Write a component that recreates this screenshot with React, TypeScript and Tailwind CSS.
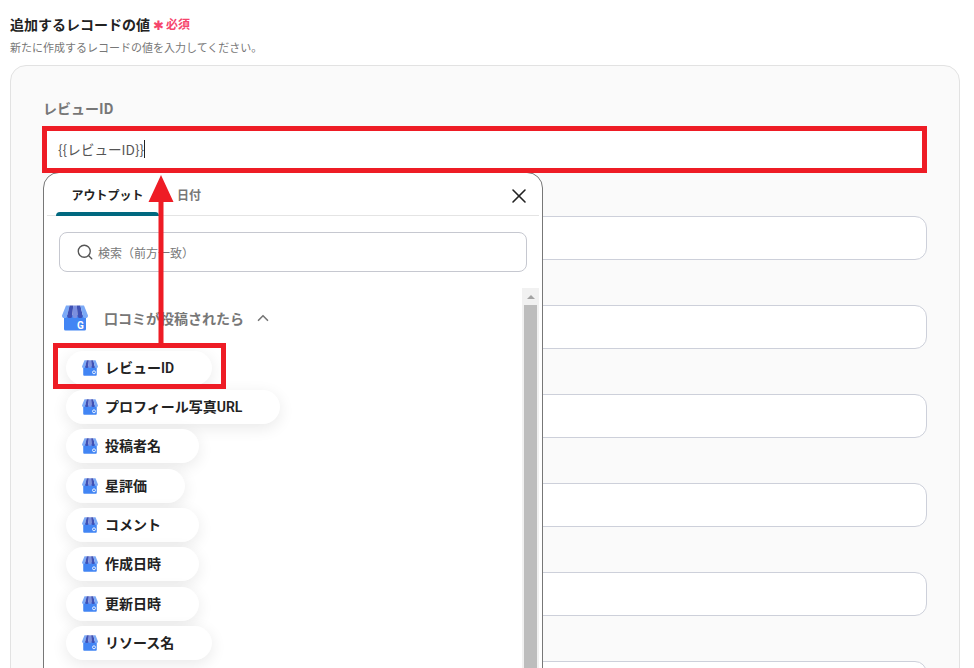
import React from "react";
import { ChevronUp, Search, X } from "lucide-react";

const outputs = [
  { label: "レビューID" },
  { label: "プロフィール写真URL" },
  { label: "投稿者名" },
  { label: "星評価" },
  { label: "コメント" },
  { label: "作成日時" },
  { label: "更新日時" },
  { label: "リソース名" },
];

// five awning stripes: [top-left x, top-right x, bottom-left x, bottom-right x, colour]
const stripes: [number, number, number, number, string][] = [
  [4, 7.6, 0, 5.2, "#7baaf7"],
  [7.6, 11.2, 5.2, 10.4, "#3f51b5"],
  [11.2, 14.8, 10.4, 15.6, "#7b8fe0"],
  [14.8, 18.4, 15.6, 20.8, "#3f51b5"],
  [18.4, 22, 20.8, 26, "#7baaf7"],
];

function StoreIcon({ small }: { small?: boolean }) {
  return (
    <svg
      viewBox="0 0 26 26"
      className={small ? "w-4 h-4 shrink-0" : "w-[26px] h-[26px] shrink-0"}
    >
      <path d="M2 10h22v14a1.5 1.5 0 0 1-1.5 1.5h-19A1.5 1.5 0 0 1 2 24z" fill="#4285f4" />
      {stripes.map(([a, b, c, d, color]) => (
        <path
          key={a}
          d={`M${a} 0.5H${b}L${d} 10.5A2.6 2.6 0 0 1 ${c} 10.5Z`}
          fill={color}
        />
      ))}
      {small ? (
        <circle cx="19.5" cy="20" r="2.4" fill="none" stroke="#fff" strokeWidth="1.4" />
      ) : (
        <text x="15" y="23.5" fontSize="10" fontWeight="700" fill="#fff" fontFamily="Roboto, sans-serif">
          G
        </text>
      )}
    </svg>
  );
}

function OutputPicker() {
  return (
    <div className="absolute left-0 top-[74px] z-10 w-[500px] h-[600px] bg-white border border-[#777] rounded-t-2xl">
      <div className="relative h-[43px] mx-[3px] border-b border-[#e4e4e4] flex items-end">
        <div className="relative w-[103px] ml-[9px] h-[43px] flex items-center justify-center text-xs font-bold text-[#222] pt-[2px]">
          アウトプット
          <div className="absolute left-0 right-0 bottom-[-1px] h-1 rounded-t bg-[#00687f]" />
        </div>
        <div className="ml-[18px] h-[43px] flex items-center text-xs font-bold text-[#777] pt-[2px]">
          日付
        </div>
        <button className="absolute right-[8px] top-[11px] text-[#222]">
          <X size={24} strokeWidth={1.6} />
        </button>
      </div>

      <div className="mx-[15px] mt-4 h-10 border border-[#c6c8d0] rounded-lg flex items-center pl-[16px] gap-[4px] text-xs text-[#777]">
        <Search size={18} strokeWidth={1.8} className="text-[#555]" />
        <span className="pt-px">検索（前方一致）</span>
      </div>

      <div className="relative mt-4 flex">
        <div className="flex-1 pl-[9px]">
          <div className="flex items-center h-[26px] mt-[17px] ml-[9px]">
            <StoreIcon />
            <span className="ml-4 text-sm font-bold text-[#777]">口コミが投稿されたら</span>
            <ChevronUp size={18} strokeWidth={2.2} className="ml-[10px] text-[#777]" />
          </div>
          <div className="mt-[19.5px] ml-[13px] flex flex-col items-start gap-[5.4px]">
            {outputs.map((item) => (
              <div
                key={item.label}
                className="h-[34px] flex items-center gap-[7px] pl-4 pr-[38px] rounded-full bg-white shadow-[0_4px_16px_rgba(0,0,0,0.09)] text-sm font-semibold text-[#222] whitespace-nowrap font-['Roboto','Noto_Sans_CJK_JP',sans-serif]"
              >
                <StoreIcon small />
                {item.label}
              </div>
            ))}
          </div>
        </div>
        <div className="w-[17px] mr-[3px] h-[500px] bg-[#f1f1f1] flex flex-col items-center">
          <div className="h-[17px] flex items-center justify-center">
            <div className="w-0 h-0 border-x-4 border-x-transparent border-b-4 border-b-[#a3a3a3]" />
          </div>
          <div className="w-[13px] flex-1 bg-[#bdbdbd]" />
        </div>
      </div>
    </div>
  );
}

function Annotations() {
  return (
    <>
      <div className="absolute left-[42px] top-[126px] w-[885px] h-[47px] border-[5px] border-[#ee1c25] z-20" />
      <div className="absolute left-[53px] top-[343px] w-[173px] h-[46px] border-[5px] border-[#ee1c25] z-20" />
      <svg className="absolute left-[140px] top-[170px] z-20" width="44" height="180" viewBox="0 0 44 180">
        <path d="M21 5 L33.5 32 H23.5 V176 H18.5 V32 H8.5 Z" fill="#ee1c25" />
      </svg>
    </>
  );
}

export default function App() {
  return (
    <div className="relative h-screen overflow-hidden bg-white pl-[10px] pr-[14px] font-['Noto_Sans_CJK_JP','Noto_Sans',sans-serif]">
      <div className="pt-[13px] flex items-center h-[34px]">
        <h2 className="text-sm font-bold text-[#222]">追加するレコードの値</h2>
        <span className="ml-[3px] text-[#f6456c] text-[13px] leading-none mt-[2px]">✱</span>
        <span className="ml-[2px] text-xs font-bold text-[#f6456c]">必須</span>
      </div>
      <p className="mt-[5px] text-[11px] leading-4 text-[#777]">新たに作成するレコードの値を入力してください。</p>

      <div className="mt-[10px] h-[700px] bg-[#fafafa] border border-[#e2e2e2] rounded-2xl px-8 pt-8 flex flex-col gap-4">
        <div className="relative">
          <div className="h-5 mb-[9px] text-sm font-bold leading-5 text-[#777]">レビューID</div>
          <div className="h-11 bg-white pl-[15px] flex items-center text-[13.6px] text-[#555]">
            {"{{レビューID}}"}
            <span className="w-px h-[18px] bg-[#222]" />
          </div>
          <OutputPicker />
        </div>
        {[1, 2, 3, 4, 5, 6].map((n) => (
          <div key={n}>
            <div className="h-5 mb-[9px]" />
            <div className="h-11 bg-white border border-[#cdd0da] rounded-[12px]" />
          </div>
        ))}
      </div>

      <Annotations />
    </div>
  );
}
